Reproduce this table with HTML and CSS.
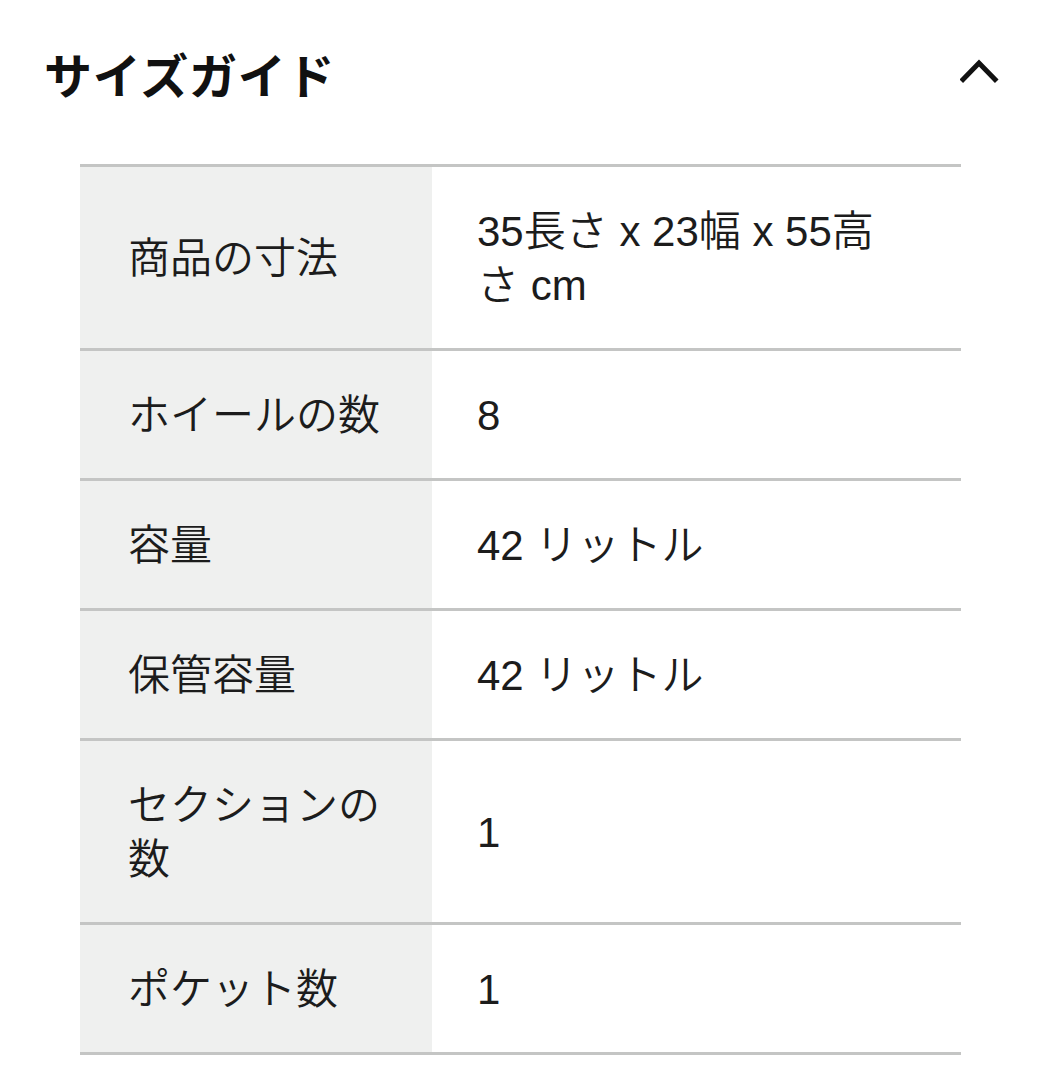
FILE: index.html
```html
<!DOCTYPE html>
<html lang="ja">
<head>
<meta charset="utf-8">
<title>サイズガイド</title>
<link rel="stylesheet" href="styles.css">
</head>
<body>
<section class="guide">
  <header class="guide-head">
    <h2 class="guide-title">サイズガイド</h2>
    <svg class="chevron" width="40" height="26" viewBox="0 0 40 26" aria-hidden="true">
      <polyline points="3,21.5 19,5 35,21.5" fill="none" stroke="#111" stroke-width="5" stroke-linecap="square" stroke-linejoin="miter"/>
    </svg>
  </header>
  <table class="spec">
    <tbody>
      <tr><th>商品の寸法</th><td>35長さ x 23幅 x 55高さ cm</td></tr>
      <tr><th>ホイールの数</th><td>8</td></tr>
      <tr><th>容量</th><td>42 リットル</td></tr>
      <tr><th>保管容量</th><td>42 リットル</td></tr>
      <tr><th>セクションの数</th><td>1</td></tr>
      <tr><th>ポケット数</th><td>1</td></tr>
    </tbody>
  </table>
</section>
</body>
</html>
```

FILE: styles.css
```css
html, body {
  margin: 0;
  padding: 0;
  background: #ffffff;
}

body {
  font-family: "Liberation Sans", "Noto Sans CJK JP", sans-serif;
  color: #1c1c1c;
}

.guide {
  width: 1043px;
}

.guide-head {
  display: flex;
  align-items: center;
  justify-content: space-between;
  padding: 40px 43px 0 44px;
  height: 66px;
}

.guide-title {
  margin: 0;
  font-family: "Noto Sans CJK JP", sans-serif;
  font-size: 48px;
  font-weight: 700;
  line-height: 66px;
  color: #111;
  letter-spacing: 0.8px;
}

.chevron {
  display: block;
  margin-top: -4px;
}

.spec {
  margin: 58px 0 0 80px;
  width: 881px;
  border-collapse: collapse;
  border-top: 3px solid #c4c5c4;
  table-layout: fixed;
}

.spec tr {
  border-bottom: 3px solid #c4c5c4;
}

.spec th,
.spec td {
  font-size: 42px;
  font-weight: 350;
  line-height: 54px;
  text-align: left;
  vertical-align: middle;
  padding-top: 37.5px;
  padding-bottom: 35.5px;
}

.spec th {
  width: 352px;
  box-sizing: border-box;
  background: #eff0ef;
  padding-left: 48px;
  padding-right: 40px;
}

.spec td {
  padding-left: 45px;
  padding-right: 60px;
}
```
